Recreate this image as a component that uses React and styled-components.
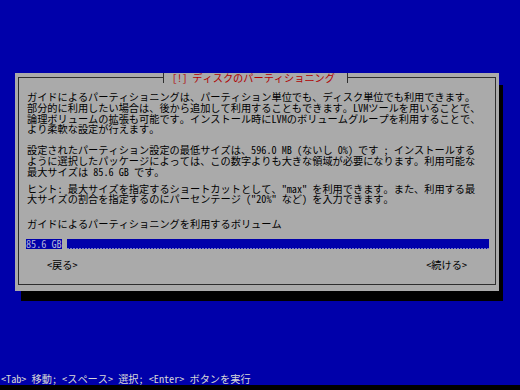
import React from "react";
import styled, { createGlobalStyle } from "styled-components";

const GlobalStyle = createGlobalStyle`
  html, body {
    margin: 0;
    padding: 0;
    background: #0000aa;
  }
  body {
    width: 520px;
    height: 390px;
    overflow: hidden;
    font-family: "Noto Sans Mono CJK JP", "Noto Sans CJK JP", "DejaVu Sans Mono", monospace;
  }
`;

const Screen = styled.div`
  display: flex;
  flex-direction: column;
  width: 520px;
  height: 390px;
  background: #0000aa;
`;

const Stage = styled.div`
  flex: 1;
  padding: 73px 0 0 15px;
`;

const Dialog = styled.div`
  box-sizing: border-box;
  width: 484px;
  height: 218px;
  background: #aaaaaa;
  box-shadow: 5px 11px 0 -1px #000;
  padding: 4px 3px 6px 3px;
  display: flex;
  flex-direction: column;
`;

const Frame = styled.div`
  flex: 1;
  border: 1px solid #2e2e2e;
  display: flex;
  flex-direction: column;
`;

const TitleRow = styled.div`
  display: flex;
  height: 10px;
  margin-top: -5px;
  padding-left: 144px;
`;

const Title = styled.div`
  background: #aaaaaa;
  border-left: 1px solid #2e2e2e;
  border-right: 1px solid #2e2e2e;
  padding: 0 12px 0 8px;
  color: #b00000;
  font-size: 10.2px;
  line-height: 10px;
  white-space: pre;
`;

const Para = styled.div`
  margin: ${(p) => p.$top}px 0 0 8px;
  color: #000;
  font-size: 10.2px;
  line-height: 10.8px;
  white-space: pre;
`;

const Field = styled.div`
  display: flex;
  height: 10px;
  margin: 9.6px 6px 0 7px;
  font-size: 10.2px;
  line-height: 10px;
`;

const FieldText = styled.span`
  background: #0000aa;
  color: #b4b4d8;
  white-space: pre;
`;

const Cursor = styled.span`
  width: 5px;
  background: #aaaaaa;
`;

const FieldRest = styled.span`
  flex: 1;
  background-color: #0000aa;
  background-image: repeating-linear-gradient(
    to right,
    #7b7bc4 0 2px,
    transparent 2px 3px
  );
  background-size: 100% 1px;
  background-position: 0 100%;
  background-repeat: no-repeat;
`;

const Buttons = styled.div`
  display: flex;
  justify-content: space-between;
  margin-top: 11px;
  padding: 0 28px;
  color: #000;
  font-size: 10.2px;
  line-height: 10.8px;
  white-space: pre;
`;

const Status = styled.div`
  height: 10.8px;
  padding-left: 1px;
  color: #d8d8d8;
  font-size: 10.2px;
  line-height: 10.8px;
  white-space: pre;
`;

const BottomStrip = styled.div`
  height: 5px;
  background: #000;
`;

export default function App() {
  return (
    <>
      <GlobalStyle />
      <Screen>
        <Stage>
          <Dialog>
            <Frame>
              <TitleRow>
                <Title>[!] ディスクのパーティショニング</Title>
              </TitleRow>
              <Para $top={9}>
                {"ガイドによるパーティショニングは、パーティション単位でも、ディスク単位でも利用できます。\n" +
                  "部分的に利用したい場合は、後から追加して利用することもできます。LVMツールを用いることで、\n" +
                  "論理ボリュームの拡張も可能です。インストール時にLVMのボリュームグループを利用することで、\n" +
                  "より柔軟な設定が行えます。"}
              </Para>
              <Para $top={10}>
                {"設定されたパーティション設定の最低サイズは、596.0 MB (ないし 0%) です ; インストールする\n" +
                  "ように選択したパッケージによっては、この数字よりも大きな領域が必要になります。利用可能な\n" +
                  "最大サイズは 85.6 GB です。"}
              </Para>
              <Para $top={6}>
                {"ヒント: 最大サイズを指定するショートカットとして、\"max\" を利用できます。また、利用する最\n" +
                  "大サイズの割合を指定するのにパーセンテージ (\"20%\" など) を入力できます。"}
              </Para>
              <Para $top={13.4}>ガイドによるパーティショニングを利用するボリューム</Para>
              <Field>
                <FieldText>85.6 GB</FieldText>
                <Cursor />
                <FieldRest />
              </Field>
              <Buttons>
                <span>{"<戻る>"}</span>
                <span>{"<続ける>"}</span>
              </Buttons>
            </Frame>
          </Dialog>
        </Stage>
        <Status>{"<Tab> 移動; <スペース> 選択; <Enter> ボタンを実行"}</Status>
        <BottomStrip />
      </Screen>
    </>
  );
}
